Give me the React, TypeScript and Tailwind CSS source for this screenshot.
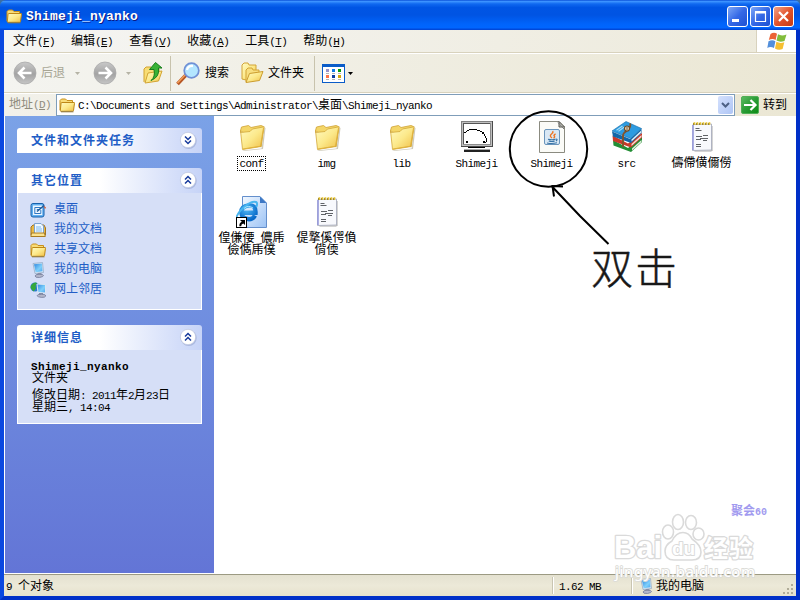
import type { ReactNode } from "react"
import { clsx } from "clsx"

// CJK glyphs fill a 12px cell, latin ones half of it
function Txt({ children, className }: { children: string; className?: string }) {
  const parts = children.match(/[\x20-\x7e]+|[^\x20-\x7e]+/g) ?? []
  return (
    <span className={clsx("whitespace-pre", className)}>
      {parts.map((part, i) =>
        /[\x20-\x7e]/.test(part[0]) ? (
          <span key={i} className="text-[11px] tracking-[-0.6px]">{part}</span>
        ) : (
          <span key={i}>{part}</span>
        ),
      )}
    </span>
  )
}

function Gradients() {
  return (
    <svg width="0" height="0" className="absolute">
      <defs>
        <linearGradient id="folder" x1="0" y1="0" x2="1" y2="1">
          <stop offset="0" stopColor="#fffbc4" />
          <stop offset="0.5" stopColor="#fce98b" />
          <stop offset="1" stopColor="#efbe45" />
        </linearGradient>
        <linearGradient id="screen" x1="0" y1="0" x2="1" y2="1">
          <stop offset="0" stopColor="#2f86e0" />
          <stop offset="0.6" stopColor="#7fd0fb" />
          <stop offset="1" stopColor="#4aa4ee" />
        </linearGradient>
        <linearGradient id="grayBall" x1="0" y1="0" x2="0" y2="1">
          <stop offset="0" stopColor="#c9c9c9" />
          <stop offset="0.55" stopColor="#a3a3a3" />
          <stop offset="1" stopColor="#c6c6c6" />
        </linearGradient>
        <linearGradient id="page" x1="0" y1="0" x2="1" y2="1">
          <stop offset="0" stopColor="#f2f8ff" />
          <stop offset="1" stopColor="#9cc3f5" />
        </linearGradient>
        <radialGradient id="ball" cx="0.4" cy="0.3" r="0.8">
          <stop offset="0" stopColor="#4fb8f5" />
          <stop offset="1" stopColor="#0668c8" />
        </radialGradient>
        <linearGradient id="go" x1="0" y1="0" x2="1" y2="1">
          <stop offset="0" stopColor="#5dbb63" />
          <stop offset="0.5" stopColor="#2a9c36" />
          <stop offset="1" stopColor="#0b8a12" />
        </linearGradient>
      </defs>
    </svg>
  )
}

function FolderSmall({ className }: { className?: string }) {
  return (
    <svg width="16" height="16" viewBox="0 0 16 16" className={className}>
      <path d="M1 13V3.5L2.5 2h4L8 3.5h5.5V6" fill="#f8dc78" stroke="#c8901c" />
      <path d="M1.3 13.5 2 6.5Q2.1 5.5 3 5.5h12q.7 0 .5.8l-1 7.2q-.1.8-1 .8H2q-.8 0-.7-.8Z" fill="url(#folder)" stroke="#bd8717" />
      <path d="M2 14.8h12.5" stroke="#8f7b45" />
    </svg>
  )
}

function FolderLarge() {
  return (
    <svg width="32" height="32" viewBox="0 0 32 32">
      <path d="M6 29.5 25.5 27.5 28.5 6.5 29.5 7 27 28 8 30Z" fill="#b9b39c" opacity="0.7" />
      <path d="M4.5 9.5 5.5 6l7-1.5 2.5 2L25 4.5l2.5 1L25 26Z" fill="#f4d668" stroke="#cfa235" strokeWidth="0.8" />
      <path d="M4.5 9.5 6.5 28.5 25 25.5 28.2 5.8 16.5 8 14 10.5 4.5 11.5Z" fill="url(#folder)" stroke="#d2a739" strokeWidth="0.8" />
      <path d="M7 28 24.5 25.2 27.5 7" fill="none" stroke="#e0b23d" />
    </svg>
  )
}

function ComputerSmall() {
  return (
    <svg width="16" height="16" viewBox="0 0 16 16">
      <path d="M3 1.5 12.5.5 13.5 10.5 5 11.5Z" fill="#dce9f5" stroke="#8da5c2" strokeWidth="0.7" />
      <path d="M4 2.3 11.9 1.5 12.5 9.3 5.6 10.2Z" fill="url(#screen)" />
      <path d="M7.5 11h4v2h-4Z" fill="#8d95ac" />
      <path d="M5 14q0-1.5 4-1.8 4.5 0 4.5 1.3t-4 2Q5 15.7 5 14Z" fill="#b3b7cb" stroke="#747c9b" strokeWidth="0.8" />
    </svg>
  )
}

function DesktopSmall() {
  return (
    <svg width="17" height="16" viewBox="0 0 17 16">
      <rect x="1" y="1.5" width="13" height="13.5" rx="2" fill="#62b0f0" stroke="#1761ac" />
      <rect x="3" y="3.5" width="9.2" height="9.5" fill="#eef7ff" />
      <path d="M4.8 11.8V5.5h6M6.8 7.5h3M4.8 11.5h6V8" stroke="#2f78c4" fill="none" />
      <path d="M7 9.5 14 3.5" stroke="#1d5996" strokeWidth="1.5" />
      <path d="M13.5 3.8 16 5.5 15 7Z" fill="#e05527" />
    </svg>
  )
}

function DocumentsSmall() {
  return (
    <svg width="16" height="16" viewBox="0 0 16 16">
      <path d="M1 13V5l2-2h11l1.5 3v7Z" fill="#e9b947" stroke="#a47620" />
      <path d="M4.5 12V1.5h6.5L13.5 4v8Z" fill="#f0f8ff" stroke="#7aa3d2" />
      <path d="M6 5h5M6 7h6M6 9h6" stroke="#7db9ef" />
      <path d="M.8 14.5 1.5 11h13l.8 3.5Z" fill="#fbe28d" stroke="#a87b22" />
    </svg>
  )
}

function NetworkSmall() {
  return (
    <svg width="17" height="16" viewBox="0 0 17 16">
      <circle cx="5" cy="5" r="4.6" fill="#2b7bd0" />
      <path d="M1 3.5Q4-.5 7 1L5.5 4 6 6.5 3.5 9.5.7 6Z" fill="#35a83a" />
      <path d="M7 2 15.5 2.5 15.5 11 8 10.5Z" fill="url(#screen)" stroke="#dbe6f2" />
      <path d="M9 11h4v2H9Z" fill="#868fa8" />
      <path d="M7 13.7q0-1.5 4.5-1.5t4.3 1.8q-.7 1.7-4.3 1.4T7 13.7Z" fill="#b3b7cb" stroke="#747c9b" strokeWidth="0.8" />
    </svg>
  )
}

function MonitorIcon() {
  return (
    <svg width="32" height="32" viewBox="0 0 32 32" shapeRendering="crispEdges">
      <rect width="32" height="26" fill="#4a4a4a" />
      <rect width="31" height="25" fill="#808080" />
      <rect x="1" y="1" width="30" height="24" fill="#c0c0c0" />
      <rect x="2" y="2" width="28" height="22" fill="#8c8c8c" />
      <rect x="2" y="2" width="27" height="21" fill="#555" />
      <rect x="3" y="3" width="26" height="20" fill="#fff" />
      <path d="M3 11h2v1H3zM5 10h1v1H5zM6 9h2v1H6zM8 8h8v1H8zM16 9h3v1h-3zM19 10h2v1h-2zM21 11h2v2h-2zM23 13h1v2h-1zM24 15h1v2h-1zM25 17h1v4h-1zM23 21h2v1h-2z" fill="#000" />
      <path d="M5 20h2v2H5zM22 20h2v2h-2z" fill="#000" />
      <path d="M7 26h17v1H7z" fill="#000" />
      <path d="M3 28h26v1H3z" fill="#aaa" />
      <path d="M3 29h26v2H3z" fill="#222" />
    </svg>
  )
}

function JavaIcon() {
  return (
    <svg width="32" height="32" viewBox="0 0 32 32">
      <path d="M3.5.5H23L28.5 6v25.5h-25Z" fill="#fbfbf7" stroke="#8b8b80" />
      <path d="M23 .5V6h5.5Z" fill="#c9c9c2" stroke="#55554d" />
      <path d="M22 1.5 28 8" stroke="#777" />
      <rect x="8.5" y="8.5" width="15" height="15" rx="1.5" fill="#d9e8f4" stroke="#6b95bb" />
      <path d="M16 17q-3-2-.5-4 2-1.3 1.3-3M17.5 17.2q2-1.5.5-2.6 0-1 1.6-1.6" fill="none" stroke="#ee7523" strokeWidth="1.4" />
      <path d="M12 18.2q4 1 7.5 0M12.7 20q3.3 1 6 0M11 22q5 1.2 10-.2M19.8 18q2.5 0 .2 2" fill="none" stroke="#3975a7" strokeWidth="1.1" />
    </svg>
  )
}

function BooksIcon() {
  return (
    <svg width="32" height="32" viewBox="0 0 32 32">
      <path d="M2 19 17 27 31 16V21L20 31 2.5 24.5Z" fill="#238e35" />
      <path d="M21 27.5 30.5 19v2L21 29.5Z" fill="#e5eedf" />
      <path d="M1.5 14.5 17 22.5 31 12v4.5L20 26.5 2 20Z" fill="#c8392a" />
      <path d="M20.5 23 30.5 14v2L20.5 25Z" fill="#f2dfd6" />
      <path d="M1 10.5 19 18 30.5 7.5V12L20 22 2 15.5Z" fill="#1167a8" />
      <path d="M20.5 18.5 30 9.8v1.9L20.5 20.4Z" fill="#e8f0f3" />
      <path d="M1 10 15 .5 30.5 7.5 19.5 17.5Z" fill="#2d9be0" stroke="#126aa8" strokeWidth="0.6" />
      <path d="M5.5 9.3 11.5 5M7.5 10.2 13 6.3" stroke="#a4ddf8" strokeWidth="1.1" />
      <path d="M19 2.5Q20.5 6 16 9.5 12 12 12 15v11" fill="none" stroke="#83532a" strokeWidth="1.9" />
      <circle cx="16" cy="7.5" r="2.5" fill="#f1e5cd" stroke="#704820" strokeWidth="1.2" />
      <path d="M16 6v3" stroke="#704820" />
    </svg>
  )
}

function NotepadIcon() {
  return (
    <svg width="32" height="32" viewBox="0 0 32 32">
      <path d="M8.5 29.5h17v1h-17zM25.5 5h1v25h-1z" fill="#a9a9a9" />
      <path d="M7 3.5 25.5 3 25.5 29 6.5 29.5Z" fill="#f8f9fd" stroke="#a1a6b8" strokeWidth="0.8" />
      <path d="M7 4v25" stroke="#8e91dc" strokeWidth="1.4" />
      <path d="M7 3h18" stroke="#68603c" strokeWidth="2" strokeDasharray="1.5 1.5" />
      <path d="M7.5 2.5h18" stroke="#e6c22f" strokeWidth="2.4" strokeDasharray="1.8 1.2" />
      <path d="M9.5 7.5h4M9.5 9.5h6M10 15.5h6M17 14.5h5M10 18.5h5M14 17.5h8M17 19.5h4M10 23.5h5M10 25.5h5" stroke="#606368" />
    </svg>
  )
}

function ShortcutIcon() {
  return (
    <svg width="32" height="32" viewBox="0 0 32 32">
      <path d="M6.5.5H24L30.5 7v24.5h-24Z" fill="url(#page)" stroke="#648fcc" />
      <path d="M24 .5V7h6.5Z" fill="#3d78c5" />
      <path d="M19 19.5q-2 3.7-6 3.7Q5.5 22.5 5.3 16.5T12.5 9.5t7 7.3H7" fill="none" stroke="url(#ball)" strokeWidth="4.4" />
      <path d="M1 24q-2-4 5-11Q15 4 20 6q2 1 .3 5" fill="none" stroke="#48b5ef" strokeWidth="2" />
      <path d="M8 12.5Q12 8.5 17 12" fill="none" stroke="#a7e5ff" />
      <rect x="0.5" y="21.5" width="10" height="10" fill="#fff" stroke="#000" />
      <path d="M4 24h5v5l-1.7-1.6Q5 28 5.2 30.3H3.4Q3 27 5.8 25.8Z" fill="#000" />
    </svg>
  )
}

function WindowsFlag() {
  return (
    <svg width="20" height="19" viewBox="0 0 20 19">
      <path d="M3.5 2Q7-.5 10 1.8L8.6 8Q5.5 6.2 1.8 8Z" fill="#ec6335" />
      <path d="M11 2.3Q14.5 4.5 19.5 2.5L17.5 9Q13 10.5 9.5 8.6Z" fill="#82bd3c" />
      <path d="M1.5 9.3Q5.3 7.2 8.4 9.3L7 16Q3.5 14.2.3 16Z" fill="#538fdb" />
      <path d="M9.4 9.8Q13 11.8 17.3 10.2L15.6 17Q11.5 18.8 8 16.4Z" fill="#f6bf31" />
    </svg>
  )
}

function NavBall({ forward }: { forward?: boolean }) {
  return (
    <svg width="24" height="24" viewBox="0 0 24 24">
      <circle cx="12" cy="12" r="11" fill="url(#grayBall)" stroke="#a9a9a9" strokeWidth="0.8" />
      <path
        d={forward ? "M5.5 12h12M12.5 6.5 18 12l-5.5 5.5" : "M18.5 12h-12M11.5 6.5 6 12l5.5 5.5"}
        fill="none" stroke="#fff" strokeWidth="2.6"
      />
    </svg>
  )
}

function Caret({ className }: { className: string }) {
  return (
    <svg width="5" height="3" viewBox="0 0 5 3" className={className}>
      <path d="M0 0h5L2.5 3Z" />
    </svg>
  )
}

function TitleButton({ close, children }: { close?: boolean; children: ReactNode }) {
  return (
    <button
      className={clsx(
        "h-[21px] w-[21px] rounded-[3px] border border-white bg-linear-to-br",
        close ? "from-[#f0a186] via-[#e2532c] to-[#c53a10]" : "from-[#7ea6f6] via-[#3568e6] to-[#1d50d2]",
      )}
    >
      <svg width="19" height="19" viewBox="0 0 19 19">{children}</svg>
    </button>
  )
}

function TitleBar() {
  return (
    <div className="flex h-[30px] shrink-0 items-center rounded-t-[6px] bg-[linear-gradient(#0a50d8_0%,#3b92ff_5%,#1069f0_13%,#0055e4_25%,#0054e3_50%,#0064fb_80%,#0066ff_92%,#0040cf_100%)] pt-[3px] pr-[6px] pl-[6px]">
      <FolderSmall className="mb-[2px]" />
      <span className="ml-1 text-[13px] leading-[16px] font-bold tracking-[0.2px] text-white [text-shadow:1px_1px_#0a1883]">
        Shimeji_nyanko
      </span>
      <div className="ml-auto flex gap-[2px]">
        <TitleButton><path d="M4 12h7v3H4z" fill="#fff" /></TitleButton>
        <TitleButton><path d="M4.5 5v9.5h10V5Z" fill="none" stroke="#fff" strokeWidth="1.2" /><path d="M4 4h11v2.5H4z" fill="#fff" /></TitleButton>
        <TitleButton close><path d="M5 5 14 14M14 5 5 14" stroke="#fff" strokeWidth="2.2" /></TitleButton>
      </div>
    </div>
  )
}

const menus = [
  ["文件", "F"],
  ["编辑", "E"],
  ["查看", "V"],
  ["收藏", "A"],
  ["工具", "T"],
  ["帮助", "H"],
]

function Mnemonic({ label, letter }: { label: string; letter: string }) {
  return (
    <span className="whitespace-nowrap">
      {label}
      <span className="text-[11px] tracking-[-0.6px]">(<u className="underline-offset-1">{letter}</u>)</span>
    </span>
  )
}

function MenuBar() {
  return (
    <div className="flex h-[23px] shrink-0 border-b border-[#d8d2bd] bg-linear-to-r from-[#f5f5f3] to-[#edeadb]">
      <div className="flex items-center gap-4 pt-[2px] pl-[9px]">
        {menus.map(([label, letter]) => (
          <Mnemonic key={letter} label={label} letter={letter} />
        ))}
      </div>
      <div className="ml-auto flex w-10 items-center justify-center border-l border-[#d8d2bd] bg-white">
        <WindowsFlag />
      </div>
    </div>
  )
}

function Toolbar() {
  return (
    <div className="flex h-[40px] shrink-0 items-center border-t border-b border-t-white border-b-[#d8d2bd] bg-linear-to-r from-[#f4f4f0] to-[#ebe7d4] pl-[9px]">
      <NavBall />
      <span className="ml-[4px] pt-[2px] text-[#a7a594]">后退</span>
      <Caret className="ml-[10px] fill-[#b5b3a5]" />
      <span className="ml-[13px]"><NavBall forward /></span>
      <Caret className="ml-[9px] fill-[#b5b3a5]" />
      <svg width="20" height="24" viewBox="0 0 20 24" className="ml-[12px]">
        <path d="M1 21V8l2-2h5l1 2h7v4" fill="#f8dd75" stroke="#d1a32f" />
        <path d="M2 22 5 12l14-2-3.5 10Z" fill="url(#folder)" stroke="#d3a534" />
        <path d="M8 19.5Q12.5 16 11 8.5H6.5L12.5 1.5 19 7h-3.5Q17 16 8 19.5Z" fill="#38b235" stroke="#187d1c" />
      </svg>
      <div className="ml-[7px] h-[35px] w-px bg-[#c8c3ad]" />
      <svg width="25" height="25" viewBox="0 0 25 25" className="ml-[5px]">
        <path d="M1.5 23 10 14" stroke="#b65523" strokeWidth="3.6" />
        <path d="M1.5 22 9.5 13.5" stroke="#f3a15b" strokeWidth="1.4" />
        <circle cx="15.5" cy="9.5" r="7.3" fill="#b4e6ff" stroke="#7090d5" strokeWidth="1.7" />
        <path d="M11 9Q12 4.5 17 5" fill="none" stroke="#fff" strokeWidth="2.3" />
      </svg>
      <span className="ml-[4px] pt-[2px]">搜索</span>
      <svg width="23" height="22" viewBox="0 0 23 22" className="ml-[12px]">
        <path d="M1 17V3l2-2h4l1 2h7v5L5 18Z" fill="url(#folder)" stroke="#d2a436" />
        <path d="M5 20V8l2-2h4l1 2h6v3" fill="#f8df80" stroke="#d2a436" />
        <path d="M5 20.5 8.5 11.5 22 9.5 18.5 18.5Z" fill="url(#folder)" stroke="#cc9d2e" />
      </svg>
      <span className="ml-[4px] pt-[2px]">文件夹</span>
      <div className="ml-[10px] h-[35px] w-px bg-[#c8c3ad]" />
      <svg width="23" height="19" viewBox="0 0 23 19" className="ml-[7px]" shapeRendering="crispEdges">
        <rect width="23" height="19" rx="1" fill="#0a5cc8" />
        <rect x="1" y="3" width="21" height="15" fill="#fff" />
        <path d="M4 5h3v3H4z" fill="#9b93c8" />
        <path d="M10 5h3v3h-3z" fill="#0d7be5" />
        <path d="M16 5h3v3h-3z" fill="#089a0c" />
        <path d="M4 11h3v3H4z" fill="#ff7448" />
        <path d="M10 11h3v3h-3z" fill="#0b3ba0" />
        <path d="M16 11h3v3h-3z" fill="#d6a50b" />
        <path d="M4 9h3v1H4zM10 9h3v1h-3zM16 9h3v1h-3zM4 15h3v1H4zM10 15h3v1h-3zM16 15h3v1h-3z" fill="#b5b5b5" />
      </svg>
      <Caret className="ml-[3px] fill-black" />
    </div>
  )
}

function AddressBar() {
  return (
    <div className="flex h-[23px] shrink-0 items-center border-t border-white bg-linear-to-r from-[#f2f1ea] to-[#ebe7d4] pl-[5px]">
      <span className="w-[47px] text-[#8f8c7d]"><Mnemonic label="地址" letter="D" /></span>
      <div className="flex h-[22px] w-[679px] items-center border border-[#7f9db9] bg-white pr-px pl-[2px]">
        <FolderSmall />
        <Txt className="ml-[3px] pt-[2px]">C:\Documents and Settings\Administrator\桌面\Shimeji_nyanko</Txt>
        <div className="ml-auto flex h-[18px] w-[15px] items-center justify-center rounded-[2px] bg-linear-to-br from-[#d5e1fd] to-[#aec5f5]">
          <svg width="9" height="6" viewBox="0 0 9 6"><path d="M1 1 4.5 4.5 8 1" fill="none" stroke="#4d6185" strokeWidth="2" /></svg>
        </div>
      </div>
      <svg width="18" height="18" viewBox="0 0 18 18" className="ml-[6px]">
        <rect x="0.5" y="0.5" width="17" height="17" rx="1.5" fill="url(#go)" stroke="#4fae56" />
        <path d="M3 9h11M9.5 4 14.5 9l-5 5" fill="none" stroke="#fff" strokeWidth="2.2" />
      </svg>
      <span className="ml-[4px] pt-[2px]">转到</span>
    </div>
  )
}

function TaskPane({ title, collapsed, children }: { title: string; collapsed?: boolean; children?: ReactNode }) {
  return (
    <section>
      <header className="flex h-[25px] items-center rounded-t-[3px] bg-linear-to-r from-white from-45% to-[#c6d3f7] pr-[5px] pl-[14px]">
        <h2 className="pt-[2px] text-[12px] font-bold tracking-[1px] text-[#215dc6]">{title}</h2>
        <svg width="18" height="19" viewBox="0 0 18 19" className="mb-px ml-auto">
          <circle cx="9.7" cy="10" r="8" fill="#98a8d2" opacity="0.65" />
          <circle cx="9" cy="9" r="7.7" fill="#fff" stroke="#b9c2dc" strokeWidth="0.7" />
          <path
            d={collapsed ? "M6 5.5 9 8.5l3-3M6 9.5l3 3 3-3" : "M6 8.5l3-3 3 3M6 12.5l3-3 3 3"}
            fill="none" stroke="#173a9c" strokeWidth="1.5"
          />
        </svg>
      </header>
      {children && <div className="border border-t-0 border-white bg-[#d6dff7]">{children}</div>}
    </section>
  )
}

const places = [
  { name: "桌面", icon: <DesktopSmall /> },
  { name: "我的文档", icon: <DocumentsSmall /> },
  { name: "共享文档", icon: <FolderSmall /> },
  { name: "我的电脑", icon: <ComputerSmall /> },
  { name: "网上邻居", icon: <NetworkSmall /> },
]

function Sidebar() {
  return (
    <aside className="mb-px ml-px flex w-[209px] shrink-0 flex-col gap-[15px] bg-linear-to-b from-[#7ba2e7] to-[#6375d6] pt-[12px] pr-[12px] pl-[12px]">
      <TaskPane title="文件和文件夹任务" collapsed />
      <TaskPane title="其它位置">
        <ul className="h-[116px] pt-[6px] pl-[12px]">
          {places.map((place) => (
            <li key={place.name} className="flex h-5 items-center text-[#215dc6]">
              <span className="w-6 pt-[2px]">{place.icon}</span>
              <span className="pt-[2px]">{place.name}</span>
            </li>
          ))}
        </ul>
      </TaskPane>
      <TaskPane title="详细信息">
        <div className="flex h-[73px] flex-col pt-[11px] pl-[14px] leading-[12px]">
          <span className="-ml-px text-[11px] font-bold tracking-[0.4px]">Shimeji_nyanko</span>
          <span>文件夹</span>
          <Txt className="mt-[5px]">修改日期: 2011年2月23日</Txt>
          <Txt>星期三, 14:04</Txt>
        </div>
      </TaskPane>
    </aside>
  )
}

const files = [
  { label: ["conf"], icon: <FolderLarge />, focused: true },
  { label: ["img"], icon: <FolderLarge /> },
  { label: ["lib"], icon: <FolderLarge /> },
  { label: ["Shimeji"], icon: <MonitorIcon /> },
  { label: ["Shimeji"], icon: <JavaIcon /> },
  { label: ["src"], icon: <BooksIcon /> },
  { label: ["儔僀僙儞僗"], icon: <NotepadIcon /> },
  { label: ["偟傔偠 儂乕", "儉儁乕僕"], icon: <ShortcutIcon /> },
  { label: ["偍撉傒偔偩", "偝偄"], icon: <NotepadIcon /> },
]

function FileGrid() {
  return (
    <main className="grid flex-1 auto-rows-[75px] grid-cols-[repeat(7,75px)] bg-white pt-[5px]">
      {files.map((file, i) => (
        <div key={i} className="flex flex-col items-center">
          {file.icon}
          <div className={clsx("mt-[3px] flex flex-col items-center border border-dotted px-px pt-px leading-[12px]", file.focused ? "border-black" : "border-transparent")}>
            {file.label.map((line) => (
              <Txt key={line}>{line}</Txt>
            ))}
          </div>
        </div>
      ))}
    </main>
  )
}

function StatusBar() {
  return (
    <footer className="flex h-[22px] shrink-0 items-center border-t border-[#9c9a83] bg-linear-to-b from-[#e4e1d0] via-[#ece9d8] to-[#e6e2cd]">
      <span className="w-[549px] pt-[3px] pl-[2px]"><Txt>9 个对象</Txt></span>
      <div className="flex h-[17px] w-[79px] items-center border-l border-white pt-[2px] pl-[5px] shadow-[-1px_0_#c9c5b2]"><Txt>1.62 MB</Txt></div>
      <div className="flex h-[17px] flex-1 items-center gap-[2px] border-l border-white pl-[5px] shadow-[-1px_0_#c9c5b2]">
        <ComputerSmall />
        <span className="pt-[2px]">我的电脑</span>
      </div>
      <svg width="12" height="12" viewBox="0 0 12 12" className="mt-[8px] mr-px" shapeRendering="crispEdges">
        <path d="M8 0h2v2H8zM4 4h2v2H4zM8 4h2v2H8zM0 8h2v2H0zM4 8h2v2H4zM8 8h2v2H8z" fill="#b0ac98" />
      </svg>
    </footer>
  )
}

// Hand-drawn pointer and the stamps that lie over the window
function Annotations() {
  return (
    <svg width="800" height="600" viewBox="0 0 800 600" className="pointer-events-none absolute inset-0">
      <ellipse cx="548.5" cy="149" rx="38.7" ry="37.7" fill="none" stroke="#000" strokeWidth="2" />
      <path d="M608.5 244 580 216 552 186.5M554 196.5 552.5 186 563 186.5" fill="none" stroke="#000" strokeWidth="2" />
      <text x="591" y="284" fontSize="42" fontWeight="300" fill="#181818" stroke="#181818" strokeWidth="0.5" textLength="86">双击</text>
      <text x="731" y="515" fontSize="12" fontWeight="700" fill="#a19aef">聚会<tspan fontSize="10">60</tspan></text>
      <g fill="#fff" stroke="#dadada" strokeWidth="2.6" strokeLinejoin="round" paintOrder="stroke" fontWeight="700">
        <text x="614" y="558" fontSize="31" textLength="48" fontFamily="Liberation Sans, sans-serif" lengthAdjust="spacingAndGlyphs">Bai</text>
        <g strokeWidth="1.6" paintOrder="normal">
          <ellipse cx="668" cy="532" rx="5.5" ry="7" />
          <ellipse cx="678" cy="522" rx="5.5" ry="7.5" />
          <ellipse cx="691" cy="522.5" rx="5.5" ry="7" />
          <ellipse cx="698.5" cy="534" rx="5.5" ry="6" />
          <path d="M683 532.5q6 0 9 6.500 9 6 9 13 0 8-9 8h-18q-9 0-9-9 0-6 7-10 4-8.500 11-8.500Z" />
        </g>
        <text x="672" y="555" fontSize="19" strokeWidth="2" fontFamily="Liberation Sans, sans-serif" textLength="23">du</text>
        <text x="704" y="557" fontSize="24" textLength="49">经验</text>
      </g>
      <text x="615" y="577" fontSize="15" fontFamily="Noto Sans, sans-serif" fill="#fff" stroke="#dcdcd8" strokeWidth="1.8" paintOrder="stroke" textLength="140">jingyan.baidu.com</text>
    </svg>
  )
}

export default function App() {
  return (
    <div className="relative flex h-[600px] w-[800px] flex-col overflow-hidden bg-[#3a6ea5] font-['Liberation_Mono','Noto_Sans_CJK_SC',monospace] text-[12px] leading-[14px] text-black">
      <Gradients />
      <TitleBar />
      <div className="flex min-h-0 flex-1 flex-col border-x-4 border-b-4 border-[#0a48e0] border-r-[#0030c8] border-b-[#0030c8]">
        <MenuBar />
        <Toolbar />
        <AddressBar />
        <div className="flex min-h-0 flex-1 bg-white">
          <Sidebar />
          <FileGrid />
        </div>
        <StatusBar />
      </div>
      <Annotations />
    </div>
  )
}
